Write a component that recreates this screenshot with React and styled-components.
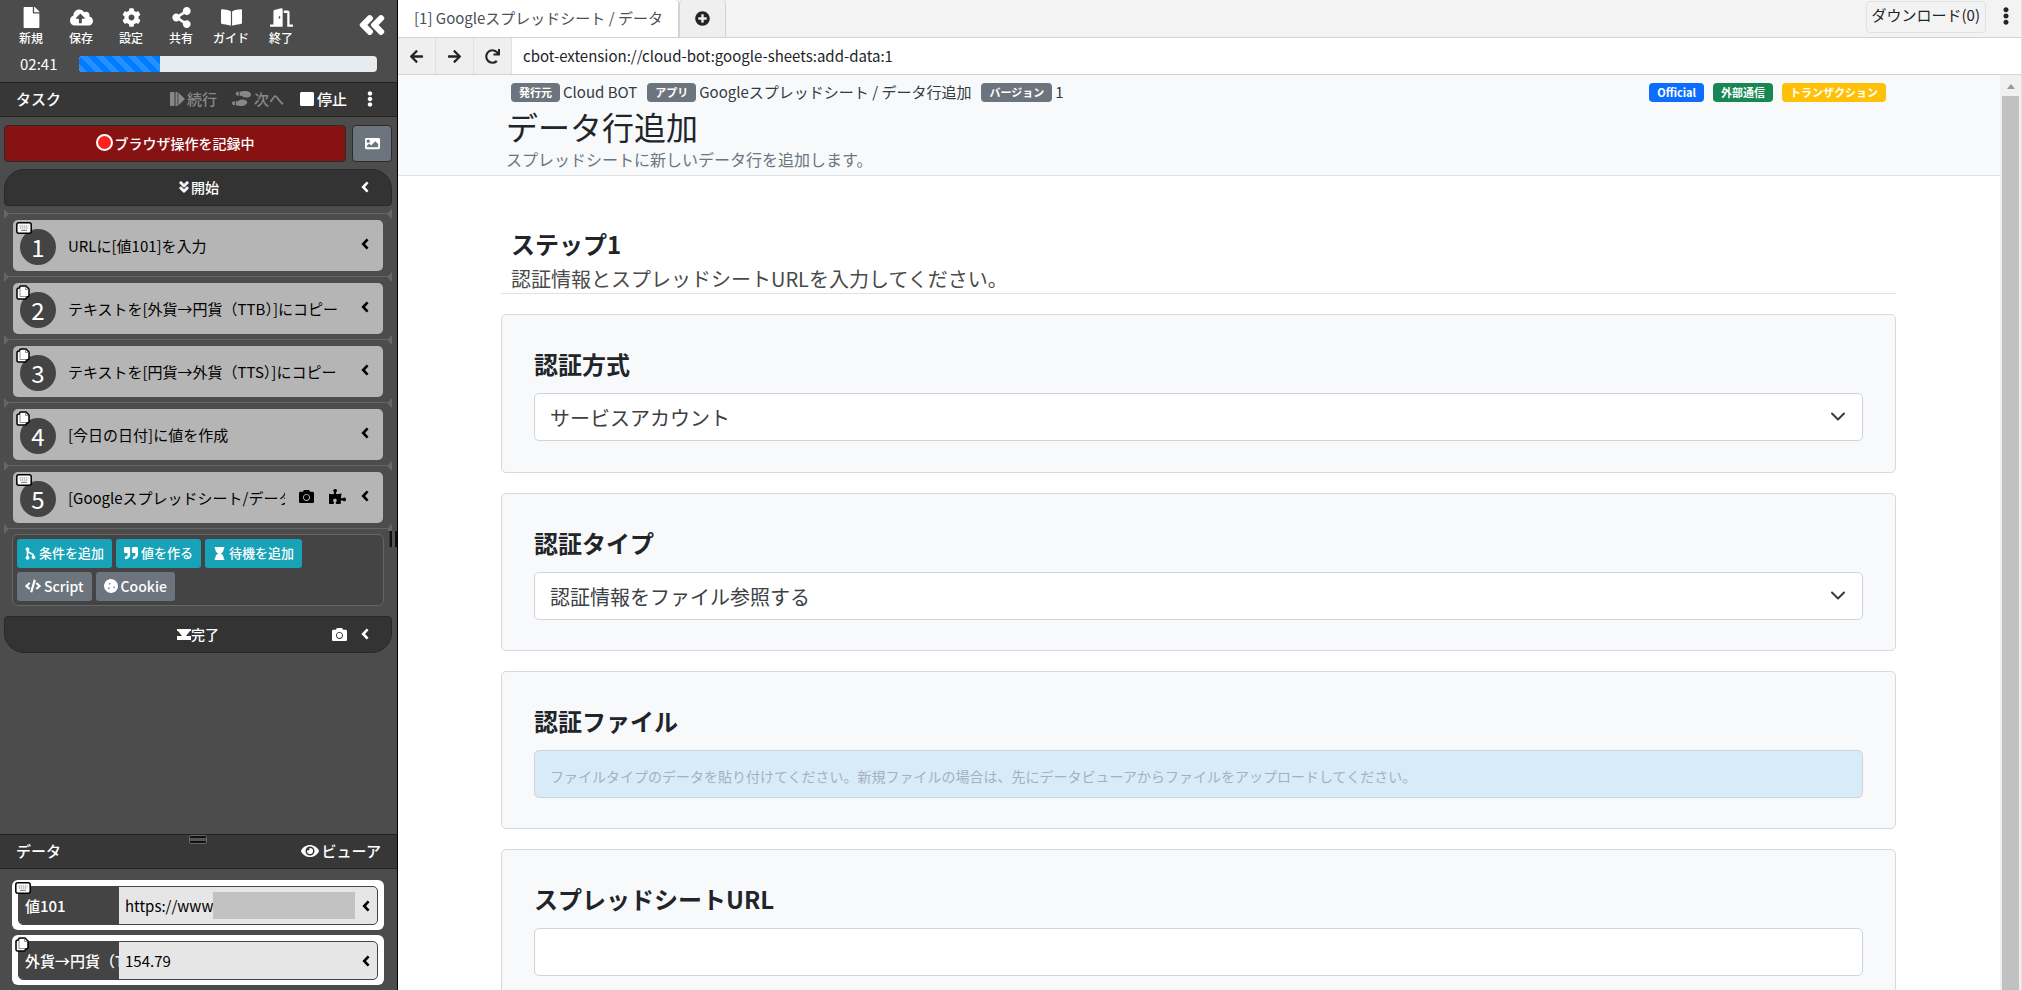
import React, { useState } from "react";
import styled, { createGlobalStyle, css } from "styled-components";
import {
  FaFile, FaCloudUploadAlt, FaCog, FaShareAlt, FaBookOpen, FaDoorOpen, FaAngleDoubleLeft,
  FaShoePrints, FaEllipsisV, FaImage, FaAngleDoubleDown, FaCamera, FaPuzzlePiece,
  FaQuoteRight, FaHourglass, FaCode, FaCookie, FaEye, FaPlusCircle, FaArrowLeft, FaArrowRight,
  FaRedo, FaStop,
} from "react-icons/fa";

const font = '"Noto Sans CJK JP", "Noto Sans", sans-serif';

const Global = createGlobalStyle`
  *, *::before, *::after { box-sizing: border-box; }
  body { margin: 0; font-family: ${font}; font-size: 16px; line-height: 24px; color: #212529; }
  button, input, select { font: inherit; color: inherit; margin: 0; }
  button { cursor: pointer; padding: 0; border: 0; background: none; white-space: nowrap; }
  svg { display: block; flex: none; }
  h1, h2, p { margin: 0; }
`;

const Shell = styled.div`
  display: flex;
  height: 100vh;
  overflow: hidden;
`;

const Sidebar = styled.aside`
  position: relative;
  flex: none;
  width: 398px;
  display: flex;
  flex-direction: column;
  background: #4c4c4c;
  color: #fff;
  border-right: 1px solid #000;
`;

const TopTools = styled.nav`
  display: flex;
  align-items: flex-start;
  padding: 7px 6px 0;
  height: 48px;
`;

const ToolButton = styled.button`
  display: flex;
  flex-direction: column;
  align-items: center;
  width: 50px;
  font-size: 12px;
  line-height: 20px;
  font-weight: 500;
  svg { height: 21px; }
`;

const Collapse = styled.button`
  margin-left: auto;
  margin-right: 4px;
  padding: 3px 0 0;
  display: flex;
`;

const TimeRow = styled.div`
  display: flex;
  align-items: center;
  height: 34px;
  padding: 0 20px 2px;
  gap: 22px;
  font-size: 15px;
`;

const Progress = styled.div`
  flex: 1;
  height: 16px;
  border-radius: 4px;
  background: #e9ecef;
  overflow: hidden;
`;

const Bar = styled.div`
  height: 100%;
  background: linear-gradient(45deg, #268fff 25%, #007bff 25%, #007bff 50%, #268fff 50%, #268fff 75%, #007bff 75%) 0 0 / 16px 16px;
`;

const SectionBar = styled.header`
  display: flex;
  align-items: center;
  height: 35px;
  padding: 0 ${(p) => p.$right || 16}px 2px 16px;
  background: #373737;
  border-top: 1px solid #222;
  border-bottom: 1px solid #222;
  font-size: 15px;
  font-weight: 500;
`;

const SectionTitle = styled.span`
  margin-right: auto;
`;

const BarButton = styled.button`
  display: flex;
  align-items: center;
  gap: ${(p) => p.$gap || 2}px;
  margin-left: 15px;
  color: ${(p) => (p.disabled ? "#878787" : "#fff")};
`;

const RecordRow = styled.div`
  display: flex;
  gap: 6px;
  padding: 8px 5px 0 4px;
`;

const Record = styled.button`
  flex: 1;
  height: 37px;
  display: flex;
  align-items: center;
  justify-content: center;
  gap: 2px;
  padding-bottom: 2px;
  border: 1px solid #2b2b2b;
  border-radius: 4px;
  background: #871212;
  font-size: 14px;
  font-weight: 500;
`;

const Dot = styled.span`
  width: 17px;
  height: 17px;
  border-radius: 50%;
  background: #ff2020;
  border: 2px solid #fff;
`;

const PictureButton = styled.button`
  width: 40px;
  height: 37px;
  display: flex;
  align-items: center;
  justify-content: center;
  border: 1px solid #2b2b2b;
  border-radius: 4px;
  background: #6c757d;
`;

const EndCap = styled.div`
  display: grid;
  grid-template-columns: 1fr auto 1fr;
  align-items: center;
  height: 37px;
  margin: ${(p) => (p.$bottom ? 10 : 7)}px 5px 0 4px;
  padding: 0 22px 1px;
  background: #333;
  border: 1px solid #292929;
  border-radius: ${(p) => (p.$bottom ? "4px 4px 20px 20px" : "20px 20px 4px 4px")};
  font-size: 14px;
  font-weight: 500;
`;

const CapLabel = styled.span`
  grid-column: 2;
  display: flex;
  align-items: center;
`;

const CapActions = styled.span`
  display: flex;
  justify-content: flex-end;
  align-items: center;
  gap: 14px;
`;

const IconButton = styled.button`
  display: flex;
`;

const InsertMark = styled.div`
  display: flex;
  align-items: center;
  height: 11px;
  margin: 0 5px 0 4px;
  &::before, &::after { content: ""; border: 5px solid transparent; }
  &::before { border-left-color: #666; border-right-width: 0; }
  &::after { border-right-color: #666; border-left-width: 0; }
`;

const MarkLine = styled.span`
  flex: 1;
  height: 1px;
  background: #666;
`;

const Steps = styled.ol`
  list-style: none;
  margin: 2px 0 0;
  padding: 0;
`;

const StepCard = styled.div`
  position: relative;
  display: flex;
  align-items: center;
  height: 51px;
  margin: 0 14px 0 13px;
  padding: 0 14px 0 7px;
  background: #b5b5b5;
  border-radius: 5px;
  color: #000;
  font-size: 15px;
`;

const StepSlot = styled.li`
  display: flex;
  flex-direction: column;
  gap: 1px;
`;

const StepNumber = styled.span`
  flex: none;
  width: 36px;
  height: 36px;
  margin: 2px 12px 0 0;
  border-radius: 50%;
  background: #444;
  color: #fff;
  font-size: 24px;
  line-height: 36px;
  text-align: center;
`;

const StepText = styled.span`
  flex: 1;
  min-width: 0;
  overflow: hidden;
  white-space: nowrap;
`;

const StepActions = styled.span`
  display: flex;
  align-items: center;
  gap: 15px;
  margin-left: 14px;
  padding-bottom: 3px;
`;

const KindBadge = styled.span`
  position: absolute;
  left: 3px;
  top: 2px;
`;

const AddPanel = styled.div`
  display: flex;
  flex-direction: column;
  gap: 4px;
  margin: 0 13px 0 12px;
  padding: 4px;
  background: #444;
  border: 1px solid #666;
  border-radius: 6px;
`;

const AddRow = styled.div`
  display: flex;
  gap: 4px;
`;

const AddButton = styled.button`
  display: flex;
  align-items: center;
  gap: 3px;
  height: 29px;
  padding: 0 8px 1px;
  border-radius: 3px;
  background: ${(p) => (p.$grey ? "#6c757d" : "#17a2b8")};
  font-size: ${(p) => (p.$grey ? 14 : 13)}px;
  font-weight: 500;
`;

const Spacer = styled.div`
  flex: 1;
`;

const DataPane = styled.section`
  position: relative;
  flex: none;
  height: 156px;
  overflow: hidden;
`;

const Grip = styled.span`
  position: absolute;
  ${(p) => p.$vertical
    ? css`right: 0; top: 531px; width: 7px; height: 16px; border: solid #111; border-width: 0 2px; background: #555; box-shadow: -1px 0 #333;`
    : css`left: 189px; top: 1px; width: 18px; height: 9px; border: 1px solid #666; border-radius: 2px; background: linear-gradient(#111 0 2px, #555 2px 5px, #111 5px);`}
`;

const DataList = styled.div`
  display: flex;
  flex-direction: column;
  gap: 5px;
  padding: 11px 13px 0 12px;
`;

const DataCard = styled.div`
  position: relative;
  flex: none;
  height: 50px;
  padding: 6px;
  background: #fff;
  border-radius: 6px;
`;

const DataInner = styled.div`
  display: flex;
  height: 39px;
  border: 1px solid #444;
  border-radius: 5px;
  overflow: hidden;
  background: #e6e6e6;
  color: #000;
  font-size: 15px;
  line-height: 38px;
`;

const DataName = styled.span`
  flex: none;
  width: 100px;
  padding-left: 6px;
  overflow: hidden;
  white-space: nowrap;
  background: #444;
  color: #fff;
  font-weight: 500;
`;

const DataValue = styled.span`
  flex: 1;
  display: flex;
  align-items: center;
  padding-left: 6px;
`;

const Redacted = styled.span`
  flex: 1;
  height: 27px;
  background: #c2c2c2;
`;

const DataToggle = styled.button`
  display: flex;
  align-items: center;
  padding: 0 7px;
`;

const Browser = styled.main`
  flex: 1;
  min-width: 0;
  display: flex;
  flex-direction: column;
  background: #fff;
  border-right: 1px solid #dee2e6;
`;

const TabStrip = styled.div`
  display: flex;
  height: 38px;
  background: #f3f3f3;
  border-bottom: 1px solid #ced4da;
`;

const Tab = styled.button`
  height: 37px;
  padding: 0 15px 1px 16px;
  background: #fff;
  border-right: 1px solid #ced4da;
  border-radius: 0 4px 0 0;
  color: #495057;
  font-size: 15px;
`;

const NewTab = styled.button`
  display: flex;
  align-items: center;
  justify-content: center;
  width: 47px;
  background: #efefef;
  border: solid #ced4da;
  border-width: 0 1px;
  border-radius: 4px 4px 0 0;
`;

const Downloads = styled.button`
  margin: 1px 11px 0 auto;
  height: 32px;
  padding: 0 5px 5px;
  border: 1px solid #dee2e6;
  border-radius: 4px;
  font-size: 15px;
`;

const MenuButton = styled.button`
  display: flex;
  align-items: center;
  height: 32px;
  margin-right: 6px;
`;

const AddressRow = styled.div`
  display: flex;
  height: 37px;
  border-bottom: 1px solid #ced4da;
`;

const NavButton = styled.button`
  display: flex;
  align-items: center;
  justify-content: center;
  width: 38px;
  background: #efefef;
  border-right: 1px solid #dee2e6;
`;

const Address = styled.input`
  flex: 1;
  min-width: 0;
  border: 0;
  outline: 0;
  padding: 0 11px;
  font-size: 15px;
`;

const Viewport = styled.div`
  flex: 1;
  min-height: 0;
  display: flex;
`;

const Page = styled.div`
  flex: 1;
  min-width: 0;
  overflow: hidden;
`;

const Scrollbar = styled.div`
  flex: none;
  width: 21px;
  padding: 9px 2px 0;
  background: #f0f0f0;
  display: flex;
  flex-direction: column;
  align-items: center;
  &::before { content: ""; border: solid transparent; border-width: 0 4px 5px; border-bottom-color: #999; }
`;

const Thumb = styled.div`
  flex: 1;
  align-self: stretch;
  margin-top: 7px;
  background: #c1c1c1;
`;

const Hero = styled.header`
  padding: 7px 104px 0 108px;
  height: 101px;
  background: #f8f9fb;
  border-bottom: 1px solid #dee2e6;
`;

const MetaRow = styled.div`
  display: flex;
  align-items: center;
  height: 20px;
  padding: 0 10px 0 5px;
  gap: 10px;
  font-size: 15px;
`;

const Meta = styled.span`
  display: flex;
  align-items: center;
  gap: 3px;
  white-space: nowrap;
  color: #343a40;
`;

const Tag = styled.span`
  height: 19px;
  padding: 0 8px;
  border-radius: 4px;
  background: ${(p) => p.$color || "#6c757d"};
  color: #fff;
  font-size: 11px;
  line-height: 19px;
  font-weight: 700;
`;

const Tags = styled.span`
  display: flex;
  gap: 9px;
  margin-left: auto;
`;

const Title = styled.h1`
  font-size: 32px;
  line-height: 46px;
  padding-top: 1px;
  font-weight: 400;
`;

const Lead = styled.p`
  font-size: 16px;
  line-height: 20px;
  color: #6c757d;
`;

const Content = styled.div`
  padding: 50px 104px 0 103px;
`;

const StepHead = styled.div`
  padding: 0 10px;
  height: 68px;
  margin-bottom: 20px;
  border-bottom: 1px solid #dee2e6;
  h2 { font-size: 24px; line-height: 36px; font-weight: 700; }
  p { font-size: 20px; line-height: 34px; color: #4a4a4a; }
`;

const Cards = styled.div`
  display: flex;
  flex-direction: column;
  gap: 20px;
`;

const Card = styled.div`
  height: 158px;
  padding: 31px 32px;
  background: #f8f9fb;
  border: 1px solid #d6dade;
  border-radius: 5px;
  &:first-child { height: 159px; }
`;

const FieldLabel = styled.label`
  display: block;
  margin-bottom: 11px;
  font-size: 24px;
  line-height: 36px;
  font-weight: 700;
`;

const field = css`
  display: block;
  width: 100%;
  height: 48px;
  border: 1px solid #ced4da;
  border-radius: 5px;
  outline: 0;
`;

const SelectWrap = styled.div`
  position: relative;
  svg { position: absolute; right: 18px; top: 19px; pointer-events: none; }
`;

const Select = styled.select`
  ${field}
  padding: 1px 15px 0;
  appearance: none;
  background: #fff;
  font-size: 20px;
  color: #3b4045;
`;

const TextField = styled.input`
  ${field}
  padding: 4px 15px 0;
  background: ${(p) => (p.$file ? "#d8ebf9" : "#fff")};
  font-size: 14px;
  &::placeholder { color: #a5b1ba; opacity: 1; }
`;

const Chevron = () => (
  <svg width="8" height="12" viewBox="0 0 8 12" fill="none" stroke="currentColor" strokeWidth="2.600">
    <path d="M6.600 1.400L2.200 6l4.400 4.600" />
  </svg>
);

const SelectArrow = () => (
  <svg width="14" height="9" viewBox="0 0 14 9" fill="none" stroke="#343a40" strokeWidth="2" strokeLinecap="round" strokeLinejoin="round">
    <path d="M1 1.500l6 6 6-6" />
  </svg>
);

const KeyboardMark = () => (
  <svg width="16" height="12" viewBox="0 0 16 12">
    <rect x=".8" y=".8" width="14.400" height="10.400" rx="2" fill="#fff" stroke="#000" strokeWidth="1.500" />
    <path d="M3.500 4h9M4 6h8.500" stroke="#678" strokeDasharray="1.200 .9" />
    <path d="M5 8.300h6" stroke="#678" />
  </svg>
);

const CopyMark = () => (
  <svg width="14" height="15" viewBox="0 0 14 15">
    <path d="M1 4.500Q1 3 3.500 3 3.500 1 5 1h5l3 3v6.500q0 1.500-2.500 1.500 0 2-1.500 2H2.500Q1 14 1 12.500z" fill="#fff" stroke="#000" strokeWidth="1.500" strokeLinejoin="round" />
    <path d="M4 3.500v8h6M9.500 1.500V4.500h3" fill="none" stroke="#777" strokeWidth=".8" />
  </svg>
);

const ResumeIcon = () => (
  <svg width="15" height="14" viewBox="0 0 15 14" fill="currentColor">
    <rect width="4.500" height="14" rx="1" />
    <path d="M5.500 0h2v14h-2zM8.300.6l6 5.700q.8.700 0 1.400l-6 5.700z" />
  </svg>
);

const BranchIcon = () => (
  <svg width="11" height="13" viewBox="0 0 11 13" fill="none" stroke="currentColor">
    <path d="M2.500 2v9M2.500 4.500L8 7.500V10" strokeWidth="1.600" />
    <circle cx="2.500" cy="2.200" r="1.500" fill="currentColor" />
    <circle cx="2.500" cy="10.800" r="1.500" fill="currentColor" />
    <circle cx="8.500" cy="10.300" r="1.500" fill="currentColor" />
  </svg>
);

const FinishIcon = () => (
  <svg width="14" height="11" viewBox="0 0 14 11" fill="currentColor">
    <path d="M0 0h14v2H13L9 7h5v4H0V7h5L1 2H0z" />
  </svg>
);

const tools = [
  ["新規", <FaFile size={19} />], ["保存", <FaCloudUploadAlt size={23} />], ["設定", <FaCog size={19} />],
  ["共有", <FaShareAlt size={19} />], ["ガイド", <FaBookOpen size={21} />], ["終了", <FaDoorOpen size={23} />],
];

const steps = [
  { text: "URLに[値101]を入力", key: true },
  { text: "テキストを[外貨→円貨（TTB）]にコピー" },
  { text: "テキストを[円貨→外貨（TTS）]にコピー" },
  { text: "[今日の日付]に値を作成" },
  { text: "[Googleスプレッドシート/データ行追加]", key: true, extra: true },
];

const Mark = () => <InsertMark><MarkLine /></InsertMark>;

const progress = 27;

export default function App() {
  const [url, setUrl] = useState("cbot-extension://cloud-bot:google-sheets:add-data:1");
  return (
    <>
      <Global />
      <Shell>
        <Sidebar>
          <TopTools>
            {tools.map(([label, icon]) => <ToolButton key={label}>{icon}{label}</ToolButton>)}
            <Collapse aria-label="折りたたむ"><FaAngleDoubleLeft size={30} stroke="currentColor" strokeWidth={24} /></Collapse>
          </TopTools>
          <TimeRow>
            <span>02:41</span>
            <Progress><Bar style={{ width: `${progress}%` }} /></Progress>
          </TimeRow>
          <SectionBar $right={19}>
            <SectionTitle>タスク</SectionTitle>
            <BarButton disabled><ResumeIcon />続行</BarButton>
            <BarButton disabled $gap={3}><FaShoePrints size={19} />次へ</BarButton>
            <BarButton><FaStop size={16} />停止</BarButton>
            <BarButton aria-label="メニュー"><FaEllipsisV size={16} /></BarButton>
          </SectionBar>
          <RecordRow>
            <Record><Dot />ブラウザ操作を記録中</Record>
            <PictureButton aria-label="画像"><FaImage size={15} /></PictureButton>
          </RecordRow>
          <EndCap>
            <CapLabel><FaAngleDoubleDown size={14} stroke="currentColor" strokeWidth={30} />開始</CapLabel>
            <CapActions><IconButton aria-label="開く"><Chevron /></IconButton></CapActions>
          </EndCap>
          <Steps>
            {steps.map((s, i) => (
              <StepSlot key={s.text}>
                <Mark />
                <StepCard>
                  <StepNumber>{i + 1}</StepNumber>
                  <StepText>{s.text}</StepText>
                  <StepActions>
                    {s.extra && <FaCamera size={15} />}
                    {s.extra && <FaPuzzlePiece size={17} />}
                    <IconButton aria-label="開く"><Chevron /></IconButton>
                  </StepActions>
                  <KindBadge>{s.key ? <KeyboardMark /> : <CopyMark />}</KindBadge>
                </StepCard>
              </StepSlot>
            ))}
          </Steps>
          <Mark />
          <AddPanel>
            <AddRow>
              <AddButton><BranchIcon />条件を追加</AddButton>
              <AddButton><FaQuoteRight size={14} />値を作る</AddButton>
              <AddButton><FaHourglass size={13} />待機を追加</AddButton>
            </AddRow>
            <AddRow>
              <AddButton $grey><FaCode size={16} />Script</AddButton>
              <AddButton $grey><FaCookie size={14} />Cookie</AddButton>
            </AddRow>
          </AddPanel>
          <EndCap $bottom>
            <CapLabel><FinishIcon />完了</CapLabel>
            <CapActions><FaCamera size={15} /><IconButton aria-label="開く"><Chevron /></IconButton></CapActions>
          </EndCap>
          <Spacer />
          <DataPane>
            <SectionBar>
              <SectionTitle>データ</SectionTitle>
              <BarButton $gap={3}><FaEye size={18} />ビューア</BarButton>
            </SectionBar>
            <Grip />
            <DataList>
              <DataCard>
                <DataInner>
                  <DataName>値101</DataName>
                  <DataValue>https://www<Redacted /></DataValue>
                  <DataToggle aria-label="開く"><Chevron /></DataToggle>
                </DataInner>
                <KindBadge><KeyboardMark /></KindBadge>
              </DataCard>
              <DataCard>
                <DataInner>
                  <DataName>外貨→円貨（TTB）</DataName>
                  <DataValue>154.79</DataValue>
                  <DataToggle aria-label="開く"><Chevron /></DataToggle>
                </DataInner>
                <KindBadge><CopyMark /></KindBadge>
              </DataCard>
              <DataCard />
            </DataList>
          </DataPane>
          <Grip $vertical />
        </Sidebar>

        <Browser>
          <TabStrip>
            <Tab>[1] Googleスプレッドシート / データ</Tab>
            <NewTab aria-label="新しいタブ"><FaPlusCircle size={15} /></NewTab>
            <Downloads>ダウンロード(0)</Downloads>
            <MenuButton aria-label="メニュー"><FaEllipsisV size={18} /></MenuButton>
          </TabStrip>
          <AddressRow>
            <NavButton aria-label="戻る"><FaArrowLeft size={15} /></NavButton>
            <NavButton aria-label="進む"><FaArrowRight size={15} /></NavButton>
            <NavButton aria-label="再読み込み"><FaRedo size={15} /></NavButton>
            <Address aria-label="アドレス" value={url} onChange={(e) => setUrl(e.target.value)} />
          </AddressRow>
          <Viewport>
            <Page>
              <Hero>
                <MetaRow>
                  <Meta><Tag>発行元</Tag>Cloud BOT</Meta>
                  <Meta><Tag>アプリ</Tag>Googleスプレッドシート / データ行追加</Meta>
                  <Meta><Tag>バージョン</Tag>1</Meta>
                  <Tags>
                    <Tag $color="#0d6efd">Official</Tag>
                    <Tag $color="#198754">外部通信</Tag>
                    <Tag $color="#ffc107">トランザクション</Tag>
                  </Tags>
                </MetaRow>
                <Title>データ行追加</Title>
                <Lead>スプレッドシートに新しいデータ行を追加します。</Lead>
              </Hero>
              <Content>
                <StepHead>
                  <h2>ステップ1</h2>
                  <p>認証情報とスプレッドシートURLを入力してください。</p>
                </StepHead>
                <Cards>
                  <Card>
                    <FieldLabel htmlFor="method">認証方式</FieldLabel>
                    <SelectWrap>
                      <Select id="method"><option>サービスアカウント</option></Select>
                      <SelectArrow />
                    </SelectWrap>
                  </Card>
                  <Card>
                    <FieldLabel htmlFor="type">認証タイプ</FieldLabel>
                    <SelectWrap>
                      <Select id="type"><option>認証情報をファイル参照する</option></Select>
                      <SelectArrow />
                    </SelectWrap>
                  </Card>
                  <Card>
                    <FieldLabel htmlFor="file">認証ファイル</FieldLabel>
                    <TextField id="file" $file placeholder="ファイルタイプのデータを貼り付けてください。新規ファイルの場合は、先にデータビューアからファイルをアップロードしてください。" />
                  </Card>
                  <Card>
                    <FieldLabel htmlFor="sheet">スプレッドシートURL</FieldLabel>
                    <TextField id="sheet" />
                  </Card>
                </Cards>
              </Content>
            </Page>
            <Scrollbar><Thumb /></Scrollbar>
          </Viewport>
        </Browser>
      </Shell>
    </>
  );
}
